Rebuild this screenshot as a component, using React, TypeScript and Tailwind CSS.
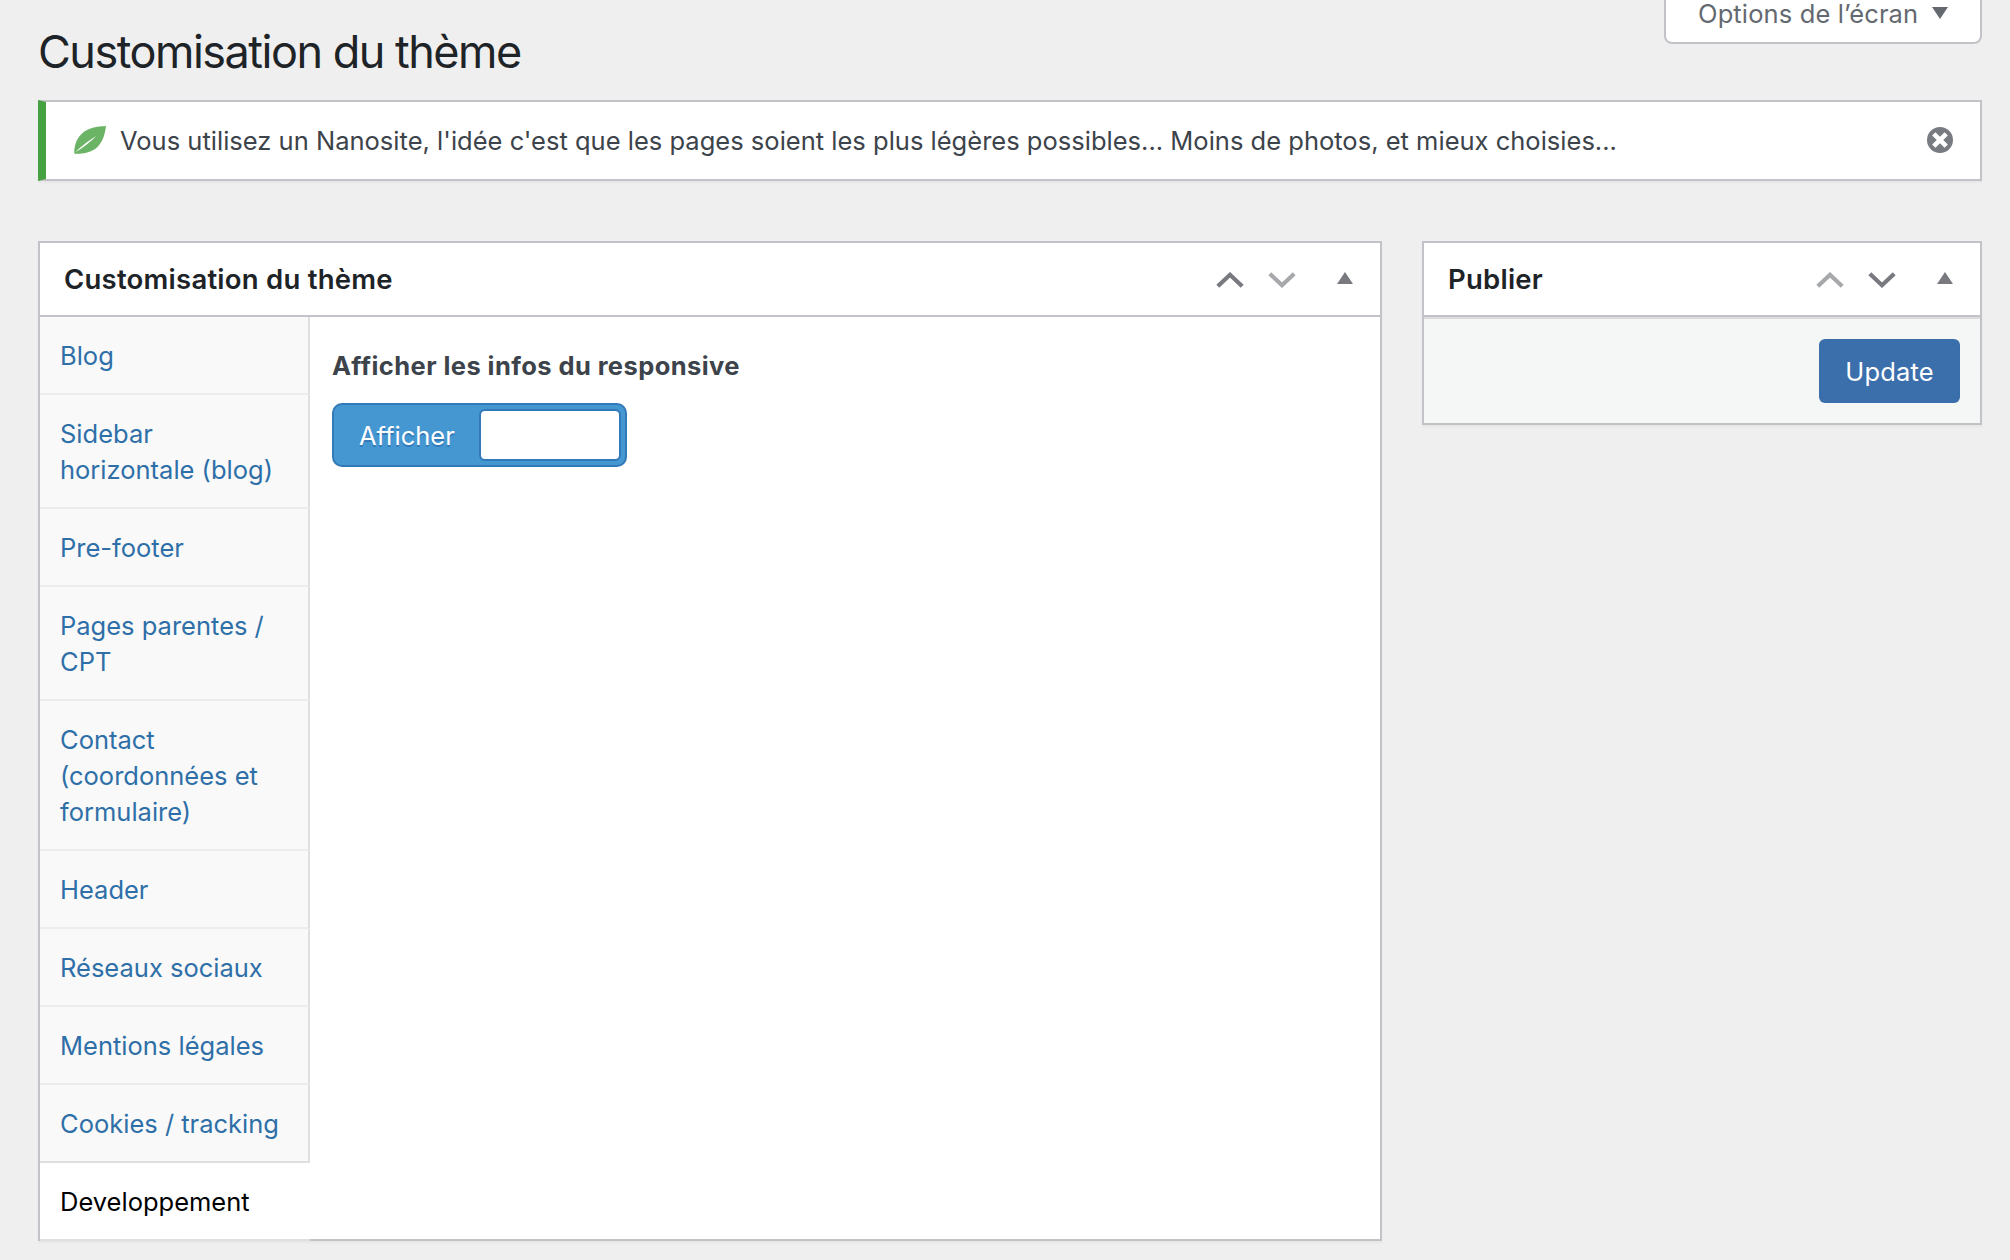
import React from "react";

const tabs = [
  ["Blog"],
  ["Sidebar", "horizontale (blog)"],
  ["Pre-footer"],
  ["Pages parentes /", "CPT"],
  ["Contact", "(coordonnées et", "formulaire)"],
  ["Header"],
  ["Réseaux sociaux"],
  ["Mentions légales"],
  ["Cookies / tracking"],
];

function Chevron({ down = false, muted = false }: { down?: boolean; muted?: boolean }) {
  return (
    <svg width="28" height="16" viewBox="0 0 28 16" fill="none" className={muted ? "text-[#a7a8ac]" : "text-[#787a80]"}>
      <path d={down ? "M1.8 1.8 14 13.2 26.2 1.8" : "M1.8 14.2 14 2.8 26.2 14.2"} stroke="currentColor" strokeWidth="4.2" />
    </svg>
  );
}

function Controls({ first = false }: { first?: boolean }) {
  return (
    <div className="flex items-start gap-6 pt-[29px]">
      <Chevron muted={first} />
      <Chevron down muted={!first} />
      <svg width="16" height="12" viewBox="0 0 16 12" className="ml-[17px] text-[#787a80]">
        <path d="M8 0 16 12H0Z" fill="currentColor" />
      </svg>
    </div>
  );
}

export default function App() {
  return (
    <div className="h-[1260px] w-[2010px] overflow-hidden bg-[#efefef] pr-7 pl-[38px] font-['Inter',sans-serif] text-[25.5px] leading-9 text-[#3c434a]">
      <header className="flex h-[100px] items-start justify-between">
        <h1 className="mt-[22px] text-[45px] leading-[60px] tracking-[-1.5px] whitespace-nowrap text-[#1d2327]">Customisation du thème</h1>
        <button className="flex h-11 w-[318px] items-start rounded-b-lg border-2 border-t-0 border-[#c2c3c8] bg-white pl-8 text-[#646970]">
          <span className="w-[234px] text-left leading-7 tracking-[0.13px] whitespace-nowrap">Options de l’écran</span>
          <svg width="16" height="12" viewBox="0 0 16 12" className="mt-[7px]">
            <path d="M0 0H16L8 12Z" fill="currentColor" />
          </svg>
        </button>
      </header>

      <div className="flex h-[81px] items-center border-2 border-l-8 border-[#c2c3c8] border-l-[#46a140] bg-white pr-[27px] shadow-[0_2px_2px_rgba(0,0,0,0.04)]">
        <svg width="32" height="28" viewBox="0 0 32 28" className="mb-px ml-7 shrink-0">
          <path d="M32 0C23 .4 14 2 8 7.500 2.500 12.500 0 20 .3 27.700 8 28 18 27 24 20.500 29 15 31 8 32 0Z" fill="#6bb466" />
          <path d="M1.300 26.300Q11 16.500 22.300 10 13.500 19 1.300 26.300Z" fill="#fff" />
        </svg>
        <p className="ml-[14px] flex-1 tracking-[0.01px] whitespace-nowrap">
          Vous utilisez un Nanosite, l'idée c'est que les pages soient les plus légères possibles... Moins de photos, et mieux choisies...
        </p>
        <svg width="26" height="26" viewBox="0 0 26 26" className="mb-px">
          <circle cx="13" cy="13" r="13" fill="#787c82" />
          <path d="M6.800 6.800 19.200 19.200M19.200 6.800 6.800 19.200" stroke="#fff" strokeWidth="4.600" />
        </svg>
      </div>

      <main className="mt-[60px] flex items-start gap-10">
        <section className="w-[1344px] bg-white shadow-[0_2px_2px_rgba(0,0,0,0.04)]">
          <div className="flex h-[76px] justify-between border-2 border-[#c2c3c8] pr-[27px] pl-6">
            <h2 className="pt-[18px] text-[27.500px] font-semibold tracking-[0.24px] whitespace-nowrap text-[#1d2327]">Customisation du thème</h2>
            <Controls />
          </div>
          <div className="flex h-[924px]">
            <nav className="w-[272px] border-l-2 border-[#c2c3c8]">
              {tabs.map((lines, i) => (
                <a
                  key={lines[0]}
                  className={
                    "block border-r-2 border-b-2 border-r-[#dfdfe0] bg-[#f9f9f9] pt-[21px] pb-[19px] pl-5 text-[#2e6fa8] " +
                    (i === tabs.length - 1 ? "border-b-[#dfdfe0]" : "border-b-[#ececec]")
                  }
                >
                  {lines.map((line) => (
                    <span key={line} className="block whitespace-nowrap">{line}</span>
                  ))}
                </a>
              ))}
              <a className="block border-b-2 border-b-[#dfdfe0] pt-[21px] pb-[19px] pl-5 text-black">Developpement</a>
            </nav>
            <div className="flex-1 border-r-2 border-b-2 border-[#c2c3c8] pt-[31px] pl-[22px]">
              <div className="font-bold tracking-[0.42px] whitespace-nowrap">Afficher les infos du responsive</div>
              <div className="mt-[19px] flex h-16 w-[295px] items-center justify-between rounded-[10px] border-2 border-[#3279b8] bg-[#4497d1] pr-1 pl-[25px] text-white">
                <span className="pt-0.5 [text-shadow:0_2px_0_#3279b8]">Afficher</span>
                <span className="h-[52px] w-[142px] rounded-md border-2 border-[#3279b8] bg-white" />
              </div>
            </div>
          </div>
        </section>

        <aside className="h-[184px] w-[560px] border-2 border-[#c2c3c8] bg-white shadow-[0_2px_2px_rgba(0,0,0,0.04)]">
          <div className="flex h-[74px] justify-between border-b-2 border-[#c2c3c8] pr-[27px] pl-6">
            <h2 className="pt-[18px] text-[27.500px] font-semibold tracking-[0.24px] text-[#1d2327]">Publier</h2>
            <Controls first />
          </div>
          <div className="flex h-[106px] items-start justify-end border-t-2 border-[#dcdcde] bg-[#f5f7f7] pt-5 pr-5">
            <button className="h-16 w-[141px] rounded-md bg-[#3b6fac] pt-0.5 tracking-[0.15px] text-white">Update</button>
          </div>
        </aside>
      </main>
    </div>
  );
}
